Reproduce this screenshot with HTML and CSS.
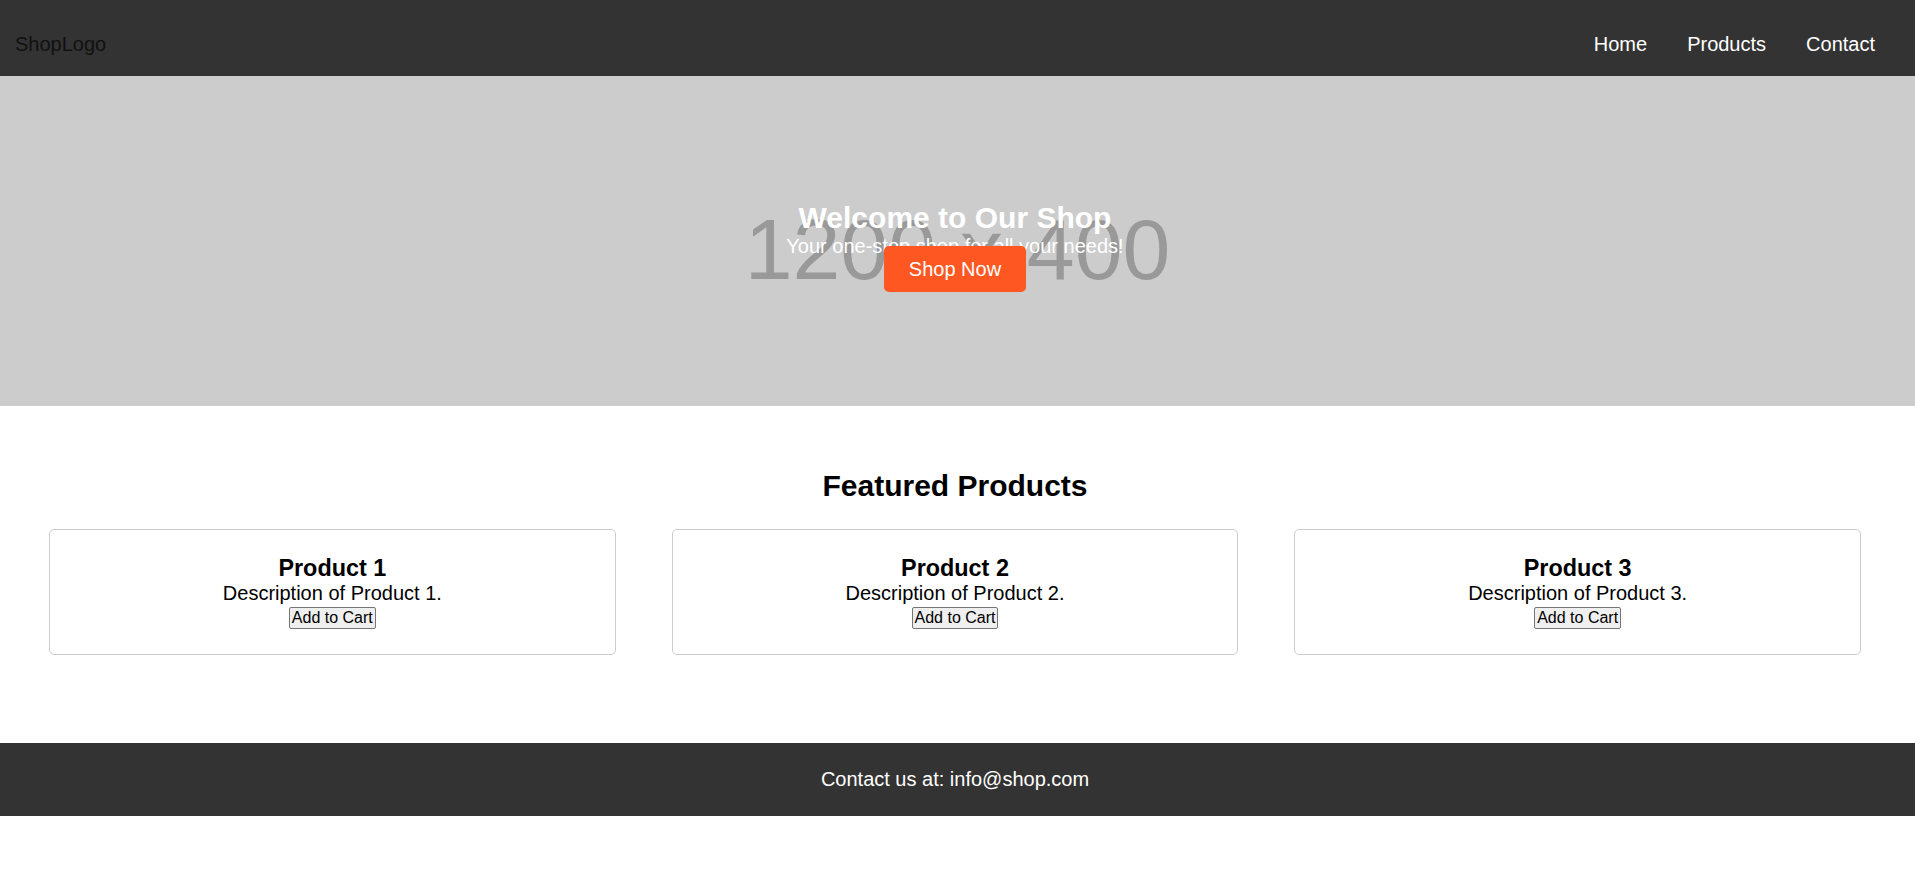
FILE: index.html
```html
<!DOCTYPE html>
<html lang="en">
<head>
<meta charset="utf-8">
<title>Shop</title>
<link rel="stylesheet" href="styles.css">
</head>
<body>
<header class="site-header">
  <div class="logo">ShopLogo</div>
  <nav class="nav">
    <a href="#" class="nav-link">Home</a>
    <a href="#" class="nav-link">Products</a>
    <a href="#" class="nav-link">Contact</a>
  </nav>
</header>
<section class="hero">
  <span class="hero-placeholder">1200 x 400</span>
  <div class="hero-content">
    <h1 class="hero-title">Welcome to Our Shop</h1>
    <p class="hero-sub">Your one-stop shop for all your needs!</p>
    <a href="#" class="hero-btn">Shop Now</a>
  </div>
</section>
<main class="featured">
  <h2 class="featured-title">Featured Products</h2>
  <div class="product-grid">
    <div class="card">
      <h3 class="card-title">Product 1</h3>
      <p class="card-desc">Description of Product 1.</p>
      <button class="card-btn">Add to Cart</button>
    </div>
    <div class="card">
      <h3 class="card-title">Product 2</h3>
      <p class="card-desc">Description of Product 2.</p>
      <button class="card-btn">Add to Cart</button>
    </div>
    <div class="card">
      <h3 class="card-title">Product 3</h3>
      <p class="card-desc">Description of Product 3.</p>
      <button class="card-btn">Add to Cart</button>
    </div>
  </div>
</main>
<footer class="site-footer">
  <p class="footer-text">Contact us at: info@shop.com</p>
</footer>
</body>
</html>
```
FILE: styles.css
```css
html, body {
  margin: 0;
  padding: 0;
}
body {
  font-family: "Liberation Sans", Arial, sans-serif;
  font-size: 20px;
  color: #000;
  background: #fff;
}
.site-header {
  background: #333;
  display: flex;
  justify-content: space-between;
  align-items: center;
  padding: 33px 40px 20px 15px;
  line-height: 23px;
}
.logo {
  color: #111;
  font-size: 20px;
}
.nav {
  display: flex;
  gap: 40px;
}
.nav-link {
  color: #fff;
  text-decoration: none;
  font-size: 20px;
}
.hero {
  position: relative;
  height: 330px;
  background: #ccc;
  display: flex;
  align-items: center;
  justify-content: center;
  padding-right: 5px;
  overflow: hidden;
}
.hero-placeholder {
  position: absolute;
  left: 50%;
  top: 130px;
  transform: translateX(-50%);
  font-size: 86px;
  line-height: 86px;
  color: #999;
  white-space: nowrap;
}
.hero-content {
  position: relative;
  text-align: center;
  color: #fff;
}
.hero-title {
  margin: 0;
  font-size: 30px;
  font-weight: bold;
}
.hero-sub {
  margin: 0;
  font-size: 20px;
}
.hero-btn {
  background: #ff5722;
  color: #fff;
  text-decoration: none;
  font-size: 20px;
  padding: 12px 25px;
  border-radius: 5px;
}
.featured {
  padding: 42px 54px 88px 49px;
}
.featured-title {
  margin: 21px 0 26px;
  text-align: center;
  font-size: 30px;
  font-weight: bold;
}
.product-grid {
  display: grid;
  grid-template-columns: repeat(3, 1fr);
  gap: 56px;
}
.card {
  border: 1px solid #ccc;
  border-radius: 5px;
  padding: 25px 10px 25px;
  text-align: center;
  font-size: 20px;
}
.card-title {
  margin: 0;
  font-size: 23.4px;
  font-weight: bold;
}
.card-desc {
  margin: 0;
  font-size: 20px;
}
.card-btn {
  font-family: "Liberation Sans", Arial, sans-serif;
  font-size: 16px;
  padding: 1px 2px;
  border: 1px solid #767676;
  border-radius: 2px;
  background: #efefef;
  color: #000;
}
.site-footer {
  background: #333;
  color: #fff;
  text-align: center;
  padding: 25px 30px 25px 25px;
}
.footer-text {
  margin: 0;
  font-size: 20px;
  line-height: 23px;
}
```
